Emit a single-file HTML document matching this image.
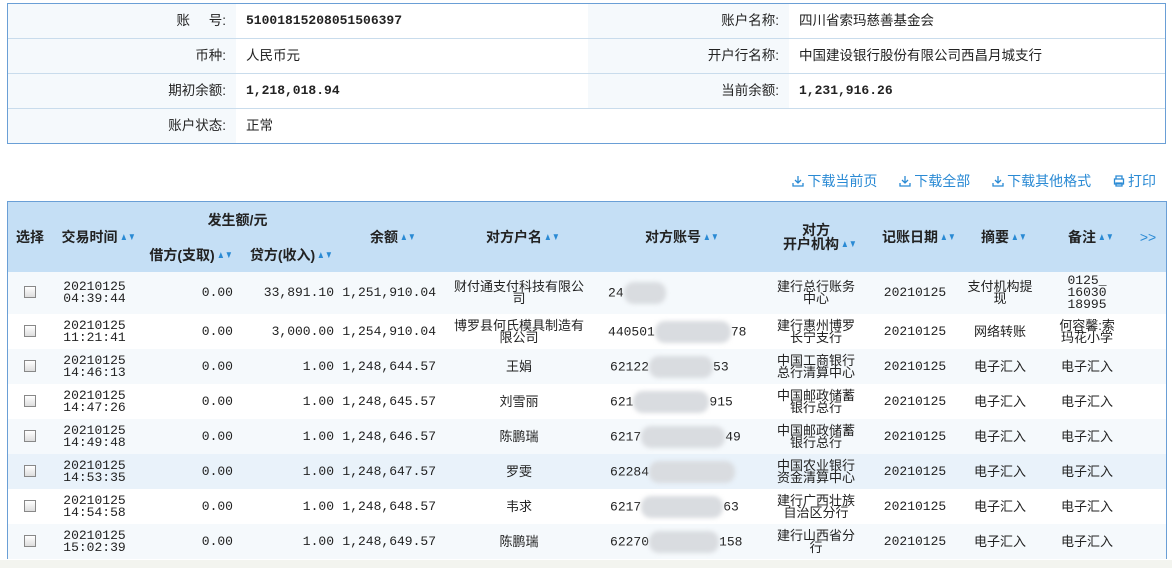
<!DOCTYPE html>
<html><head><meta charset="utf-8"><style>
*{margin:0;padding:0;box-sizing:border-box}
body{width:1172px;height:568px;background:#fff;font-family:"Liberation Sans","Noto Sans CJK SC",sans-serif;font-size:13px;color:#222;position:relative;overflow:hidden}
.info{position:absolute;left:7px;top:3px;width:1159px;height:141px;border:1px solid #6a9fd6}
.row{position:absolute;left:0;width:1157px;height:35px;border-bottom:1px solid #c9dcec;font-size:13.5px;line-height:34px}
.row div{position:absolute;top:0;height:34px;padding:0 10px;white-space:nowrap}
.l{background:#f5f9fc;text-align:right}
.num{font-family:"Liberation Mono",monospace;font-weight:bold;font-size:13px}
.bar{position:absolute;top:171px;right:16px;color:#2a8ad4;font-size:14px}
.bar span{margin-left:18px}
.ic{display:inline-block;width:12px;height:12px;vertical-align:-1px;margin-right:3px}
.main{position:absolute;left:7px;top:201px;width:1160px;height:358px;border:1px solid #6a9fd6}
.main table{border-collapse:collapse;table-layout:fixed;width:100%}
th{background:#c5dff5;font-weight:bold;font-size:14px;color:#222;height:35px;line-height:14px;white-space:nowrap}
.main td{height:35px;text-align:center;line-height:12px;font-size:13px;padding:0;white-space:nowrap;overflow:hidden}
.mono{font-family:"Liberation Mono",monospace;font-size:11.6px}
.r{text-align:right!important;padding-right:4px!important}
tr.o td{background:#f5f9fc}
tr.h td{background:#e9f2fa}
.s{color:#2a8ad4;font-size:10px;display:inline-block;width:9px;line-height:8px;vertical-align:middle;margin-left:1px;white-space:normal;transform:scaleX(0.8)}
.cb{display:inline-block;width:12px;height:12px;border:1px solid #888;background:linear-gradient(#fff,#ddd)}
.bl{display:inline-block;width:72px;height:22px;background:#d9dce0;border-radius:10px;vertical-align:middle;filter:blur(2px)}
.foot{position:absolute;left:0;top:560px;width:1172px;height:8px;background:#f3f4ef}
</style></head><body>
<div class="info">
<div class="row" style="top:0"><div class="l" style="left:0;width:228px">账&nbsp;&nbsp;&nbsp;&nbsp;&nbsp;号:</div><div class="num" style="left:228px">51001815208051506397</div><div class="l" style="left:580px;width:201px">账户名称:</div><div style="left:781px">四川省索玛慈善基金会</div></div>
<div class="row" style="top:35px"><div class="l" style="left:0;width:228px">币种:</div><div style="left:228px">人民币元</div><div class="l" style="left:580px;width:201px">开户行名称:</div><div style="left:781px">中国建设银行股份有限公司西昌月城支行</div></div>
<div class="row" style="top:70px"><div class="l" style="left:0;width:228px">期初余额:</div><div class="num" style="left:228px">1,218,018.94</div><div class="l" style="left:580px;width:201px">当前余额:</div><div class="num" style="left:781px">1,231,916.26</div></div>
<div class="row" style="top:105px;border-bottom:none"><div class="l" style="left:0;width:228px">账户状态:</div><div style="left:228px">正常</div></div>
</div>
<div class="bar">
<span><svg class="ic" viewBox="0 0 12 12"><path d="M6 1v7M3 5l3 3 3-3M1 8v3h10V8" fill="none" stroke="#2a8ad4" stroke-width="1.3"/></svg>下载当前页</span>
<span><svg class="ic" viewBox="0 0 12 12"><path d="M6 1v7M3 5l3 3 3-3M1 8v3h10V8" fill="none" stroke="#2a8ad4" stroke-width="1.3"/></svg>下载全部</span>
<span><svg class="ic" viewBox="0 0 12 12"><path d="M6 1v7M3 5l3 3 3-3M1 8v3h10V8" fill="none" stroke="#2a8ad4" stroke-width="1.3"/></svg>下载其他格式</span>
<span><svg class="ic" viewBox="0 0 12 12"><path d="M3 4V1h6v3M1.5 4h9v5h-9zM3 8h6v3H3z" fill="none" stroke="#2a8ad4" stroke-width="1.3"/></svg>打印</span>
</div>
<div class="main"><table>
<colgroup><col style="width:44px"><col style="width:85px"><col style="width:100px"><col style="width:101px"><col style="width:102px"><col style="width:158px"><col style="width:160px"><col style="width:116px"><col style="width:82px"><col style="width:88px"><col style="width:86px"><col></colgroup>
<tr><th rowspan="2">选择</th><th rowspan="2">交易时间<span class="s">▲▼</span></th><th colspan="2">发生额/元</th><th rowspan="2">余额<span class="s">▲▼</span></th><th rowspan="2">对方户名<span class="s">▲▼</span></th><th rowspan="2">对方账号<span class="s">▲▼</span></th><th rowspan="2">对方<br>开户机构<span class="s">▲▼</span></th><th rowspan="2">记账日期<span class="s">▲▼</span></th><th rowspan="2">摘要<span class="s">▲▼</span></th><th rowspan="2">备注<span class="s">▲▼</span></th><th rowspan="2" style="color:#2a8ad4;font-weight:normal">&gt;&gt;</th></tr>
<tr><th>借方(支取)<span class="s">▲▼</span></th><th>贷方(收入)<span class="s">▲▼</span></th></tr>
<tr class="o"><td style="height:42px"><span class="cb"></span></td><td class="mono">20210125<br>04:39:44</td><td class="mono r">0.00</td><td class="mono r">33,891.10</td><td class="mono r">1,251,910.04</td><td>财付通支付科技有限公<br>司</td><td class="mono" style="text-align:left;padding-left:10px">24<span class="bl" style="width:42px"></span></td><td>建行总行账务<br>中心</td><td class="mono">20210125</td><td>支付机构提<br>现</td><td class="mono">0125_<br>16030<br>18995</td><td></td></tr>
<tr><td><span class="cb"></span></td><td class="mono">20210125<br>11:21:41</td><td class="mono r">0.00</td><td class="mono r">3,000.00</td><td class="mono r">1,254,910.04</td><td>博罗县何氏模具制造有<br>限公司</td><td class="mono" style="text-align:left;padding-left:10px">440501<span class="bl" style="width:76px"></span>78</td><td>建行惠州博罗<br>长宁支行</td><td class="mono">20210125</td><td>网络转账</td><td>何容馨:索<br>玛花小学</td><td></td></tr>
<tr class="o"><td><span class="cb"></span></td><td class="mono">20210125<br>14:46:13</td><td class="mono r">0.00</td><td class="mono r">1.00</td><td class="mono r">1,248,644.57</td><td>王娟</td><td class="mono" style="text-align:left;padding-left:12px">62122<span class="bl" style="width:64px"></span>53</td><td>中国工商银行<br>总行清算中心</td><td class="mono">20210125</td><td>电子汇入</td><td>电子汇入</td><td></td></tr>
<tr><td><span class="cb"></span></td><td class="mono">20210125<br>14:47:26</td><td class="mono r">0.00</td><td class="mono r">1.00</td><td class="mono r">1,248,645.57</td><td>刘雪丽</td><td class="mono" style="text-align:left;padding-left:12px">621<span class="bl" style="width:76px"></span>915</td><td>中国邮政储蓄<br>银行总行</td><td class="mono">20210125</td><td>电子汇入</td><td>电子汇入</td><td></td></tr>
<tr class="o"><td><span class="cb"></span></td><td class="mono">20210125<br>14:49:48</td><td class="mono r">0.00</td><td class="mono r">1.00</td><td class="mono r">1,248,646.57</td><td>陈鹏瑞</td><td class="mono" style="text-align:left;padding-left:12px">6217<span class="bl" style="width:84px"></span>49</td><td>中国邮政储蓄<br>银行总行</td><td class="mono">20210125</td><td>电子汇入</td><td>电子汇入</td><td></td></tr>
<tr class="h"><td><span class="cb"></span></td><td class="mono">20210125<br>14:53:35</td><td class="mono r">0.00</td><td class="mono r">1.00</td><td class="mono r">1,248,647.57</td><td>罗雯</td><td class="mono" style="text-align:left;padding-left:12px">62284<span class="bl" style="width:86px"></span></td><td>中国农业银行<br>资金清算中心</td><td class="mono">20210125</td><td>电子汇入</td><td>电子汇入</td><td></td></tr>
<tr><td><span class="cb"></span></td><td class="mono">20210125<br>14:54:58</td><td class="mono r">0.00</td><td class="mono r">1.00</td><td class="mono r">1,248,648.57</td><td>韦求</td><td class="mono" style="text-align:left;padding-left:12px">6217<span class="bl" style="width:82px"></span>63</td><td>建行广西壮族<br>自治区分行</td><td class="mono">20210125</td><td>电子汇入</td><td>电子汇入</td><td></td></tr>
<tr class="o"><td><span class="cb"></span></td><td class="mono">20210125<br>15:02:39</td><td class="mono r">0.00</td><td class="mono r">1.00</td><td class="mono r">1,248,649.57</td><td>陈鹏瑞</td><td class="mono" style="text-align:left;padding-left:12px">62270<span class="bl" style="width:70px"></span>158</td><td>建行山西省分<br>行</td><td class="mono">20210125</td><td>电子汇入</td><td>电子汇入</td><td></td></tr>
</table></div>
<div class="foot"></div>
</body></html>
